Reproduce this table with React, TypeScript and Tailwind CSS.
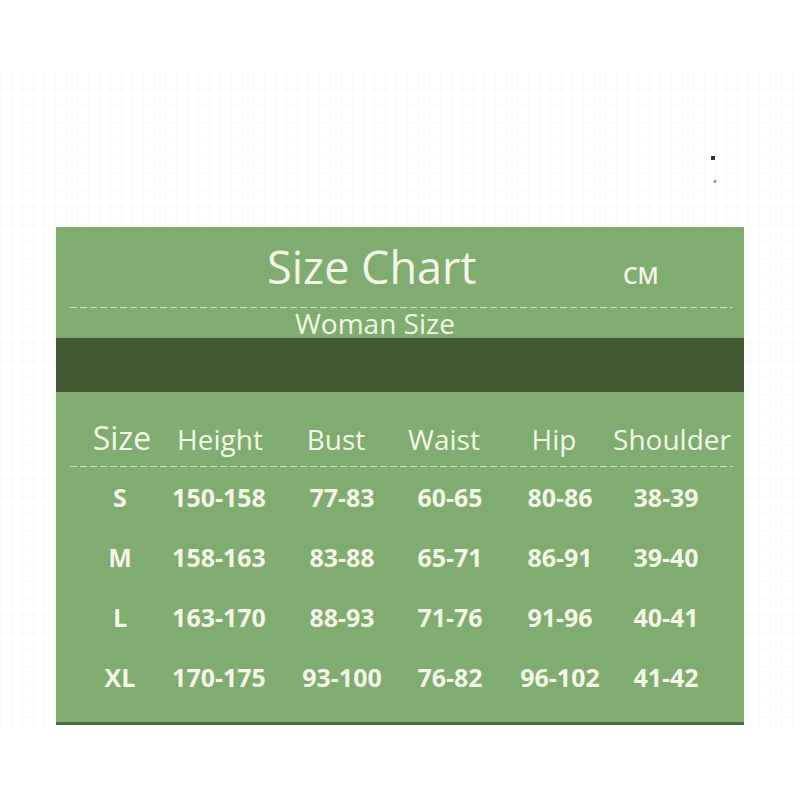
const font = { fontFamily: '"Open Sans", "Noto Sans", sans-serif' };

const headers = [
  { label: "Size", cls: "ml-[16px] text-[32px]" },
  { label: "Height", cls: "-ml-[2px] text-[28px]" },
  { label: "Bust", cls: "ml-[16px] text-[28px]" },
  { label: "Waist", cls: "ml-[8px] text-[28px]" },
  { label: "Hip", cls: "ml-[10px] text-[28px]" },
  { label: "Shoulder", cls: "ml-[18px] text-[28px]" },
];

const cellGaps = ["ml-[14px]", "-ml-[1px]", "ml-[23px]", "ml-[8px]", "ml-[10px]", "ml-[6px]"];

const rows = [
  ["S", "150-158", "77-83", "60-65", "80-86", "38-39"],
  ["M", "158-163", "83-88", "65-71", "86-91", "39-40"],
  ["L", "163-170", "88-93", "71-76", "91-96", "40-41"],
  ["XL", "170-175", "93-100", "76-82", "96-102", "41-42"],
];

function Dashed({ className }: { className: string }) {
  return (
    <div
      className={`h-px bg-[repeating-linear-gradient(90deg,#cfe0c3_0_7px,transparent_7px_10px)] ${className}`}
    />
  );
}

export default function App() {
  return (
    <div className="w-[800px] h-[800px] bg-white pt-[72px]" style={font}>
      <div className="relative h-[656px] pt-[155px] pl-[56px] bg-[linear-gradient(90deg,#f8f8f8_1px,transparent_1px),linear-gradient(0deg,#f9f9f9_1px,transparent_1px)] bg-[size:11px_17px]">
        <span className="absolute left-[711px] top-[84px] w-[4px] h-[4px] bg-[#333]" />
        <span className="absolute left-[714px] top-[108px] w-[2px] h-[3px] bg-[#777] rotate-[30deg]" />

        <div className="w-[688px] h-[498px] bg-[#80ab71] border-b-[3px] border-[#4c6b3d] flex flex-col text-[#f2f7e7]">
          {/* title block */}
          <div className="h-[111px] flex flex-col">
            <div className="flex items-baseline pt-[17px]">
              <span className="ml-[211px] w-[356px] text-[45px] leading-none">Size Chart</span>
              <span className="text-[23px] font-semibold leading-none">CM</span>
            </div>
            <Dashed className="mt-[18px] ml-[14px] mr-[11px]" />
            <span className="ml-[239px] mt-[1px] text-[28px] leading-none">Woman Size</span>
          </div>

          <div className="h-[54px] bg-[#435b33]" />

          {/* table */}
          <div className="flex flex-col">
            <div className="flex items-baseline pt-[30px]">
              {headers.map((h) => (
                <div key={h.label} className={`w-[100px] shrink-0 flex justify-center whitespace-nowrap leading-none ${h.cls}`}>
                  {h.label}
                </div>
              ))}
            </div>
            <Dashed className="mt-[12px] ml-[14px] mr-[11px]" />
            {rows.map((r) => (
              <div key={r[0]} className="h-[60px] flex items-center">
                {r.map((v, i) => (
                  <div
                    key={i}
                    className={`w-[100px] shrink-0 flex justify-center whitespace-nowrap text-[25px] font-bold leading-none ${cellGaps[i]}`}
                  >
                    {v}
                  </div>
                ))}
              </div>
            ))}
          </div>
        </div>
      </div>
    </div>
  );
}
